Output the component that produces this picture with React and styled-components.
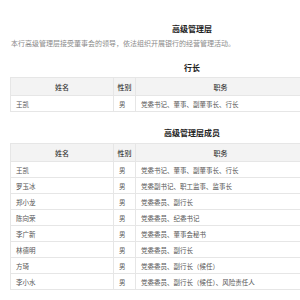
import React from 'react';
import styled, { createGlobalStyle } from 'styled-components';

const GlobalStyle = createGlobalStyle`
  html, body {
    margin: 0;
    padding: 0;
    background: #fff;
    overflow: hidden;
  }
  body {
    font-family: "Noto Sans CJK SC", "Noto Sans", sans-serif;
  }
`;

// the page is wider than the window; only its left part is shown
const Viewport = styled.div`
  width: 300px;
  height: 300px;
  overflow: hidden;
`;

const Page = styled.div`
  width: 364px;
  padding: 24px 10px 0;
`;

const Title = styled.h3`
  margin: ${props => props.gap || 0}px 0 0;
  font-size: 8px;
  line-height: 10px;
  font-weight: 700;
  color: #222;
  text-align: center;
`;

const Intro = styled.p`
  margin: 4px 0 0 1px;
  font-size: 7px;
  line-height: 10px;
  color: #8a8a8a;
`;

const Table = styled.table`
  width: 296px;
  margin-top: ${props => props.gap || 4}px;
  border-collapse: collapse;
  table-layout: fixed;
  font-size: 6.5px;
  color: #555;
`;

const HeadCell = styled.th`
  height: 17px;
  padding: 0;
  border: 1px solid #e6e6e6;
  background: #f3f3f3;
  font-size: 7px;
  font-weight: 500;
  color: #3a3a3a;
  text-align: center;
`;

const Cell = styled.td`
  height: 15px;
  padding: 0 0 0 5px;
  border: 1px solid #e6e6e6;
  text-align: left;
  white-space: nowrap;
`;

const president = [['王凯', '男', '党委书记、董事、副董事长、行长']];

const members = [
  ['王凯', '男', '党委书记、董事、副董事长、行长'],
  ['罗玉冰', '男', '党委副书记、职工监事、监事长'],
  ['郑小龙', '男', '党委委员、副行长'],
  ['陈向荣', '男', '党委委员、纪委书记'],
  ['李广新', '男', '党委委员、董事会秘书'],
  ['林德明', '男', '党委委员、副行长'],
  ['方琦', '男', '党委委员、副行长（候任）'],
  ['李小水', '男', '党委委员、副行长（候任）、风险责任人'],
];

const StaffTable = ({ rows, gap }) => (
  <Table gap={gap}>
    <colgroup>
      <col style={{ width: 103 }} />
      <col style={{ width: 22 }} />
      <col />
    </colgroup>
    <thead>
      <tr>
        <HeadCell>姓名</HeadCell>
        <HeadCell>性别</HeadCell>
        <HeadCell>职务</HeadCell>
      </tr>
    </thead>
    <tbody>
      {rows.map(([name, sex, duty]) => (
        <tr key={name}>
          <Cell>{name}</Cell>
          <Cell>{sex}</Cell>
          <Cell>{duty}</Cell>
        </tr>
      ))}
    </tbody>
  </Table>
);

const App = () => (
  <>
    <GlobalStyle />
    <Viewport>
      <Page>
        <Title>高级管理层</Title>
        <Intro>本行高级管理层接受董事会的领导，依法组织开展银行的经营管理活动。</Intro>
        <Title gap={15}>行长</Title>
        <StaffTable rows={president} gap={4} />
        <Title gap={16}>高级管理层成员</Title>
        <StaffTable rows={members} gap={5} />
      </Page>
    </Viewport>
  </>
);

export default App;
